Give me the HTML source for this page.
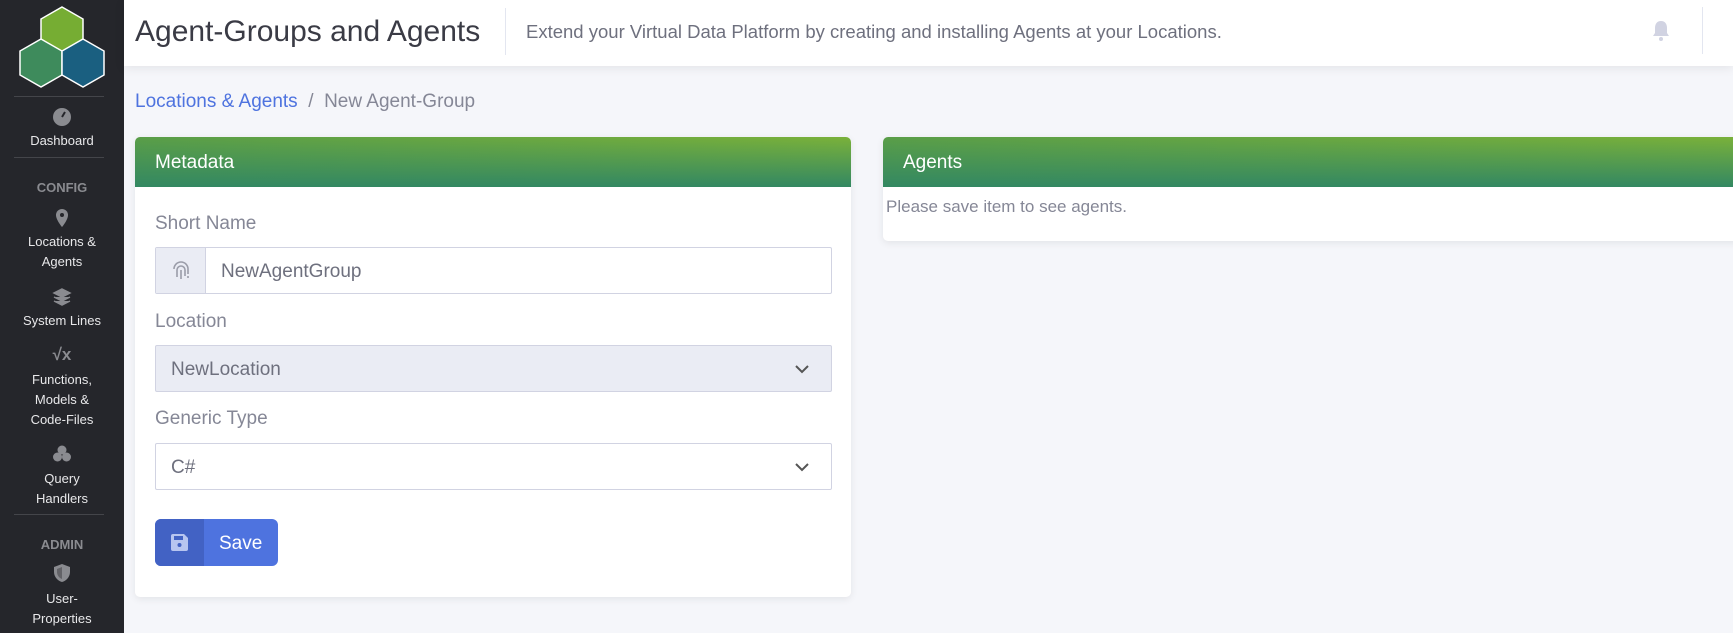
<!DOCTYPE html>
<html><head><meta charset="utf-8"><style>
*{box-sizing:border-box;margin:0;padding:0}
body{width:1733px;height:633px;overflow:hidden;background:#f5f6fa;font-family:"Liberation Sans",sans-serif;position:relative}
.sb{position:absolute;left:0;top:0;width:124px;height:633px;background:#25262b;color:#eee;text-align:center}
.sb .t{position:absolute;left:0;width:124px;font-size:13px;line-height:20px;color:#e8e8ea}
.sb .h{position:absolute;left:0;width:124px;font-size:13px;font-weight:bold;color:#8a8b90}
.sb .d{position:absolute;left:14px;width:90px;height:1px;background:#44454a}
.sb svg.i{position:absolute;left:52px}
.top{position:absolute;left:124px;top:0;right:0;height:66px;background:#fff;box-shadow:0 2px 10px rgba(0,0,0,.08)}
.card{position:absolute;background:#fff;border-radius:5px;box-shadow:0 2px 8px rgba(0,0,0,.08);overflow:hidden}
.ch{height:50px;background:linear-gradient(to top,#338862 0%,rgba(51,136,98,0) 100%),linear-gradient(to right,#5a9e48,#7ab13a);color:#fff;font-size:19px;padding:15px 20px 0}
.lab{position:absolute;left:20px;font-size:19px;color:#858796}
.box{position:absolute;left:20px;width:677px;height:47px;border:1px solid #d1d3e2;border-radius:2px;font-size:19px;color:#6e707e;padding:13px 15px 0}
</style></head><body>
<div class="sb">
<svg width="90" height="84" style="position:absolute;left:17px;top:5px" viewBox="0 0 90 84">
<polygon points="45,2 66,14 66,38 45,50 24,38 24,14" fill="#76ad33" stroke="#fff" stroke-width="1.5"/>
<polygon points="24,38 45,50 45,74 24,86 3,74 3,50" fill="#3e8b5c" stroke="#fff" stroke-width="1.5" transform="translate(0,-4)"/>
<polygon points="66,38 87,50 87,74 66,86 45,74 45,50" fill="#1a5f80" stroke="#fff" stroke-width="1.5" transform="translate(0,-4)"/>
</svg>
<div class="d" style="top:96px"></div>
<svg class="i" style="top:107px" width="20" height="20" viewBox="0 0 20 20"><circle cx="10" cy="10" r="9" fill="#8a8b90"/><path d="M10 10 L13 5" stroke="#25262b" stroke-width="2"/></svg>
<div class="t" style="top:131px">Dashboard</div>
<div class="d" style="top:157px"></div>
<div class="h" style="top:180px">CONFIG</div>
<svg class="i" style="top:208px" width="20" height="20" viewBox="0 0 20 20"><path d="M10 1a6 6 0 0 0-6 6c0 5 6 12 6 12s6-7 6-12a6 6 0 0 0-6-6z" fill="#8a8b90"/><circle cx="10" cy="7" r="2" fill="#25262b"/></svg>
<div class="t" style="top:232px">Locations &amp;<br>Agents</div>
<svg class="i" style="top:287px" width="20" height="20" viewBox="0 0 20 20"><path d="M10 2l8 4-8 4-8-4z M2 10l8 4 8-4 M2 14l8 4 8-4" fill="#8a8b90" stroke="#8a8b90" stroke-width="1.5"/></svg>
<div class="t" style="top:311px">System Lines</div>
<div style="position:absolute;left:0;width:124px;top:345px;font-size:17px;font-weight:bold;color:#8a8b90">√x</div>
<div class="t" style="top:370px;line-height:20px">Functions,<br>Models &amp;<br>Code-Files</div>
<svg class="i" style="top:444px" width="20" height="20" viewBox="0 0 20 20"><circle cx="10" cy="6" r="4.5" fill="#8a8b90"/><circle cx="5.5" cy="13" r="4.5" fill="#8a8b90"/><circle cx="14.5" cy="13" r="4.5" fill="#8a8b90"/></svg>
<div class="t" style="top:469px">Query<br>Handlers</div>
<div class="d" style="top:514px"></div>
<div class="h" style="top:537px">ADMIN</div>
<svg class="i" style="top:563px" width="20" height="20" viewBox="0 0 20 20"><path d="M10 1l8 3v5c0 5-4 9-8 10-4-1-8-5-8-10V4z" fill="#8a8b90"/><path d="M10 4v12c-3-1-5-4-5-7V6z" fill="#25262b" opacity=".4"/></svg>
<div class="t" style="top:589px">User-<br>Properties</div>
</div>
<div class="top">
<div style="position:absolute;left:11px;top:15px;font-size:30px;color:#3a3b45">Agent-Groups and Agents</div>
<div style="position:absolute;left:381px;top:8px;width:1px;height:47px;background:#e3e6f0"></div>
<div style="position:absolute;left:402px;top:21px;font-size:18.5px;color:#6e707e">Extend your Virtual Data Platform by creating and installing Agents at your Locations.</div>
<svg style="position:absolute;left:1527px;top:20px" width="20" height="22" viewBox="0 0 20 22"><path d="M10 1c-4 0-6 3-6 7v5l-2 3h16l-2-3V8c0-4-2-7-6-7z" fill="#d1d3e2"/><circle cx="10" cy="19" r="2" fill="#d1d3e2"/></svg>
<div style="position:absolute;left:1578px;top:7px;width:1px;height:47px;background:#e3e6f0"></div>
</div>
<div style="position:absolute;left:135px;top:91px;font-size:19px;color:#858796"><span style="color:#4e73df">Locations &amp; Agents</span> &nbsp;/&nbsp; New Agent-Group</div>
<div class="card" style="left:135px;top:137px;width:716px;height:460px">
<div class="ch">Metadata</div>
<div class="lab" style="top:76px">Short Name</div>
<div class="box" style="top:110px;padding-left:65px">NewAgentGroup</div>
<div style="position:absolute;left:21px;top:111px;width:50px;height:45px;background:#eaecf4;border-right:1px solid #d1d3e2"></div>
<svg style="position:absolute;left:36px;top:124px" width="20" height="20" viewBox="0 0 20 20" fill="none" stroke="#9a9ca8" stroke-width="1.6"><path d="M3 8a7 7 0 0 1 14 0v5M6 16V9a4 4 0 0 1 8 0v6M10 9v9M17 15v2"/></svg>
<div class="lab" style="top:174px">Location</div>
<div class="box" style="top:208px;background:#eaecf4">NewLocation</div>
<div class="lab" style="top:271px">Generic Type</div>
<div class="box" style="top:306px">C#</div>
<svg style="position:absolute;left:660px;top:227px" width="14" height="10" viewBox="0 0 14 10"><path d="M1 2l6 6 6-6" stroke="#555" stroke-width="2" fill="none"/></svg>
<svg style="position:absolute;left:660px;top:325px" width="14" height="10" viewBox="0 0 14 10"><path d="M1 2l6 6 6-6" stroke="#555" stroke-width="2" fill="none"/></svg>
<div style="position:absolute;left:20px;top:382px;width:123px;height:47px;background:#4e73df;border-radius:6px;overflow:hidden">
<div style="position:absolute;left:0;top:0;width:49px;height:47px;background:#4262c4"></div>
<svg style="position:absolute;left:15px;top:14px" width="19" height="19" viewBox="0 0 19 19"><path d="M1 3a2 2 0 0 1 2-2h11l4 4v11a2 2 0 0 1-2 2H3a2 2 0 0 1-2-2z" fill="#b7c5f0"/><rect x="4" y="3" width="9" height="4" fill="#4262c4"/><circle cx="9.5" cy="12" r="2" fill="#4262c4"/></svg>
<div style="position:absolute;left:64px;top:14px;color:#fff;font-size:19px">Save</div>
</div>
</div>
<div class="card" style="left:883px;top:137px;width:860px;height:104px;border-radius:5px 0 0 5px">
<div class="ch">Agents</div>
<div style="position:absolute;left:3px;top:60px;font-size:17px;color:#858796">Please save item to see agents.</div>
</div>
</body></html>
